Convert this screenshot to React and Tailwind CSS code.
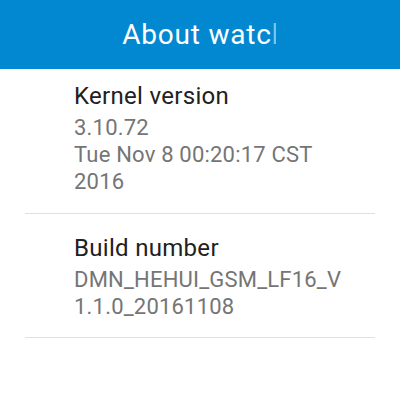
const items = [
  {
    title: 'Kernel version',
    lines: ['3.10.72', 'Tue Nov 8 00:20:17 CST', '2016'],
    pad: 'pt-[14px] pb-[18px]',
  },
  {
    title: 'Build number',
    lines: ['DMN_HEHUI_GSM_LF16_V', '1.1.0_20161108'],
    pad: 'pt-[21px] pb-[17px]',
  },
];

export default function App() {
  return (
    <div className="w-[400px] h-[400px] bg-white overflow-hidden font-['Roboto',sans-serif]">
      {/* header */}
      <div className="h-[69px] bg-[#0288d1] flex items-center justify-center">
        <span className="text-[28px] leading-none tracking-[0.8px] text-white whitespace-nowrap">
          About watc
          <span className="inline-block w-[4px] overflow-hidden align-top text-[#7fc3ea]">h</span>
          <span className="inline-block w-[2px]" />
        </span>
      </div>

      {/* list */}
      <div className="mx-[25px]">
        {items.map((item) => (
          <div key={item.title} className={`border-b border-[#e0e0e0] pl-[49px] ${item.pad}`}>
            <div className="text-[24px] leading-[27px] tracking-[0.3px] text-[#212121] mb-[4px]">
              {item.title}
            </div>
            {item.lines.map((line) => (
              <div key={line} className="text-[22px] leading-[27px] tracking-[0.2px] text-[#757575]">
                {line}
              </div>
            ))}
          </div>
        ))}
      </div>
    </div>
  );
}
